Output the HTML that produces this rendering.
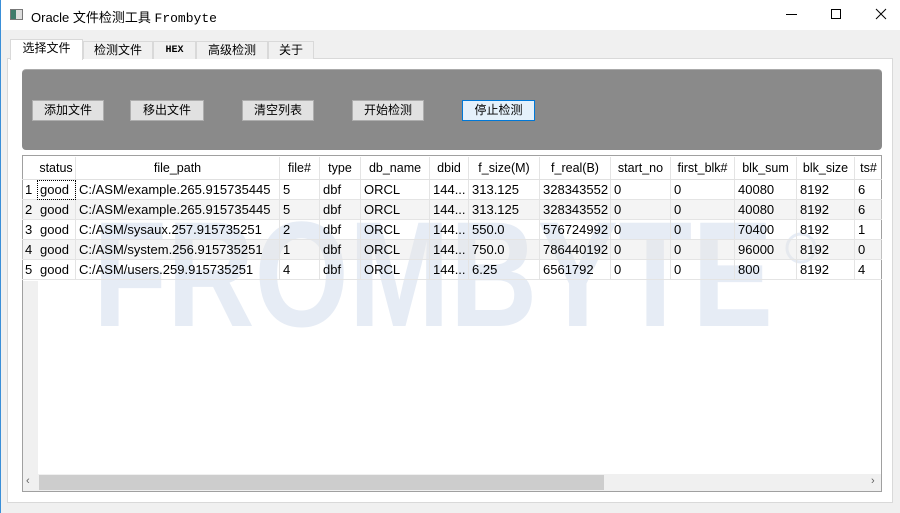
<!DOCTYPE html>
<html><head><meta charset="utf-8">
<style>
*{margin:0;padding:0;box-sizing:border-box}
body{width:900px;height:513px;background:#f0f0f0;position:relative;overflow:hidden;font-family:"Liberation Sans","Noto Sans CJK SC",sans-serif;font-size:12px;color:#000}
.abs{position:absolute}
#title{left:0;top:0;width:900px;height:30px;background:#fff;border-left:1px solid #3a8fd8}
.tab{position:absolute;top:41px;height:18px;border:1px solid #d9d9d9;border-bottom:none;background:#f0f0f0;text-align:center;line-height:17px;font-size:12px}
.btn{position:absolute;top:100px;height:21px;background:#e1e1e1;border:1px solid #adadad;text-align:center;line-height:19px;font-size:12px}
.row{position:absolute;left:22px;width:860px;height:20px;border-bottom:1px solid #e4e4e4}
.c{position:absolute;top:0;height:20px;line-height:20px;padding-left:3px;white-space:nowrap;overflow:hidden;border-right:1px solid #e4e4e4;font-size:13px}
.h .c{text-align:center;padding-left:0;line-height:22px;height:22px;border-right:1px solid #e4e4e4;font-size:12.5px}
.n{left:0;width:15px;padding-left:3px;border:none}
</style></head><body>
<div id="title" class="abs">
  <div class="abs" style="left:9px;top:9px;width:13px;height:11px;border:1px solid #777;background:linear-gradient(90deg,#3d7a6a 0 5px,#ddd 5px)"></div>
  <div class="abs" style="left:30px;top:7px;font-size:13px">Oracle 文件检测工具 <span style="font-family:'Liberation Mono',monospace">Frombyte</span></div>
  <div class="abs" style="left:785px;top:14px;width:11px;height:1px;background:#000"></div>
  <div class="abs" style="left:830px;top:9px;width:10px;height:10px;border:1px solid #000"></div>
  <svg class="abs" style="left:874px;top:8px" width="12" height="12"><path d="M1 1L11 11M11 1L1 11" stroke="#000" stroke-width="1"/></svg>
</div>
<div class="abs" style="left:7px;top:58px;width:886px;height:445px;background:#fff;border:1px solid #d9d9d9"></div>
<div class="tab" style="left:10px;top:39px;width:73px;height:21px;background:#fff;border-color:#d9d9d9">选择文件</div>
<div class="tab" style="left:83px;width:70px">检测文件</div>
<div class="tab" style="left:153px;width:43px;font-family:'Liberation Mono',monospace;font-size:10px;font-weight:bold">HEX</div>
<div class="tab" style="left:196px;width:72px">高级检测</div>
<div class="tab" style="left:268px;width:46px">关于</div>
<div class="abs" style="left:22px;top:69px;width:860px;height:81px;background:#8a8a8a;border-radius:4px;border-top:1px solid #aaa"></div>
<div class="btn" style="left:32px;width:72px">添加文件</div>
<div class="btn" style="left:130px;width:74px">移出文件</div>
<div class="btn" style="left:242px;width:72px">清空列表</div>
<div class="btn" style="left:352px;width:72px">开始检测</div>
<div class="btn" style="left:462px;width:73px;background:#e5f1fb;border-color:#0078d7">停止检测</div>
<div class="abs" style="left:22px;top:155px;width:860px;height:337px;background:#fff;border:1px solid #a0a0a0;overflow:hidden">
  <div class="abs" style="left:0;top:125px;width:15px;height:200px;background:#f0f0f0"></div>
  <svg class="abs" style="left:60px;top:48px" width="740" height="130"><text x="10" y="122" font-family="Liberation Sans" font-weight="bold" font-size="150" fill="#e6ecf5" textLength="680" lengthAdjust="spacingAndGlyphs">FROMBYTE</text><circle cx="718" cy="44" r="14" fill="none" stroke="#e6ecf5" stroke-width="3"/></svg>
</div>
<div class="row h" style="top:157px;height:23px;border-bottom:1px solid #e0e0e0">
<div class="c" style="left:15px;width:39px">status</div><div class="c" style="left:54px;width:204px">file_path</div><div class="c" style="left:258px;width:40px">file#</div><div class="c" style="left:298px;width:41px">type</div><div class="c" style="left:339px;width:69px">db_name</div><div class="c" style="left:408px;width:39px">dbid</div><div class="c" style="left:447px;width:71px">f_size(M)</div><div class="c" style="left:518px;width:71px">f_real(B)</div><div class="c" style="left:589px;width:60px">start_no</div><div class="c" style="left:649px;width:64px">first_blk#</div><div class="c" style="left:713px;width:62px">blk_sum</div><div class="c" style="left:775px;width:58px">blk_size</div><div class="c" style="left:833px;width:27px;border-right:none">ts#</div>
</div>
<div class="row" style="top:180px"><div class="c n">1</div><div class="c" style="left:15px;width:39px;outline:1px dotted #000;outline-offset:-1px">good</div><div class="c" style="left:54px;width:204px">C:/ASM/example.265.915735445</div><div class="c" style="left:258px;width:40px">5</div><div class="c" style="left:298px;width:41px">dbf</div><div class="c" style="left:339px;width:69px">ORCL</div><div class="c" style="left:408px;width:39px">144...</div><div class="c" style="left:447px;width:71px">313.125</div><div class="c" style="left:518px;width:71px">328343552</div><div class="c" style="left:589px;width:60px">0</div><div class="c" style="left:649px;width:64px">0</div><div class="c" style="left:713px;width:62px">40080</div><div class="c" style="left:775px;width:58px">8192</div><div class="c" style="left:833px;width:27px;border:none">6</div></div>
<div class="row" style="top:200px;background:rgba(230,230,230,.45)"><div class="c n">2</div><div class="c" style="left:15px;width:39px">good</div><div class="c" style="left:54px;width:204px">C:/ASM/example.265.915735445</div><div class="c" style="left:258px;width:40px">5</div><div class="c" style="left:298px;width:41px">dbf</div><div class="c" style="left:339px;width:69px">ORCL</div><div class="c" style="left:408px;width:39px">144...</div><div class="c" style="left:447px;width:71px">313.125</div><div class="c" style="left:518px;width:71px">328343552</div><div class="c" style="left:589px;width:60px">0</div><div class="c" style="left:649px;width:64px">0</div><div class="c" style="left:713px;width:62px">40080</div><div class="c" style="left:775px;width:58px">8192</div><div class="c" style="left:833px;width:27px;border:none">6</div></div>
<div class="row" style="top:220px"><div class="c n">3</div><div class="c" style="left:15px;width:39px">good</div><div class="c" style="left:54px;width:204px">C:/ASM/sysaux.257.915735251</div><div class="c" style="left:258px;width:40px">2</div><div class="c" style="left:298px;width:41px">dbf</div><div class="c" style="left:339px;width:69px">ORCL</div><div class="c" style="left:408px;width:39px">144...</div><div class="c" style="left:447px;width:71px">550.0</div><div class="c" style="left:518px;width:71px">576724992</div><div class="c" style="left:589px;width:60px">0</div><div class="c" style="left:649px;width:64px">0</div><div class="c" style="left:713px;width:62px">70400</div><div class="c" style="left:775px;width:58px">8192</div><div class="c" style="left:833px;width:27px;border:none">1</div></div>
<div class="row" style="top:240px;background:rgba(230,230,230,.45)"><div class="c n">4</div><div class="c" style="left:15px;width:39px">good</div><div class="c" style="left:54px;width:204px">C:/ASM/system.256.915735251</div><div class="c" style="left:258px;width:40px">1</div><div class="c" style="left:298px;width:41px">dbf</div><div class="c" style="left:339px;width:69px">ORCL</div><div class="c" style="left:408px;width:39px">144...</div><div class="c" style="left:447px;width:71px">750.0</div><div class="c" style="left:518px;width:71px">786440192</div><div class="c" style="left:589px;width:60px">0</div><div class="c" style="left:649px;width:64px">0</div><div class="c" style="left:713px;width:62px">96000</div><div class="c" style="left:775px;width:58px">8192</div><div class="c" style="left:833px;width:27px;border:none">0</div></div>
<div class="row" style="top:260px"><div class="c n">5</div><div class="c" style="left:15px;width:39px">good</div><div class="c" style="left:54px;width:204px">C:/ASM/users.259.915735251</div><div class="c" style="left:258px;width:40px">4</div><div class="c" style="left:298px;width:41px">dbf</div><div class="c" style="left:339px;width:69px">ORCL</div><div class="c" style="left:408px;width:39px">144...</div><div class="c" style="left:447px;width:71px">6.25</div><div class="c" style="left:518px;width:71px">6561792</div><div class="c" style="left:589px;width:60px">0</div><div class="c" style="left:649px;width:64px">0</div><div class="c" style="left:713px;width:62px">800</div><div class="c" style="left:775px;width:58px">8192</div><div class="c" style="left:833px;width:27px;border:none">4</div></div>
<div class="abs" style="left:23px;top:474px;width:858px;height:17px;background:#f0f0f0"></div>
<div class="abs" style="left:39px;top:475px;width:565px;height:15px;background:#cdcdcd"></div>
<div class="abs" style="left:26px;top:475px;font-size:11px;color:#606060">‹</div>
<div class="abs" style="left:871px;top:475px;font-size:11px;color:#606060">›</div>
<div class="abs" style="left:0;top:0;width:1px;height:513px;background:#3a8fd8"></div>
</body></html>
